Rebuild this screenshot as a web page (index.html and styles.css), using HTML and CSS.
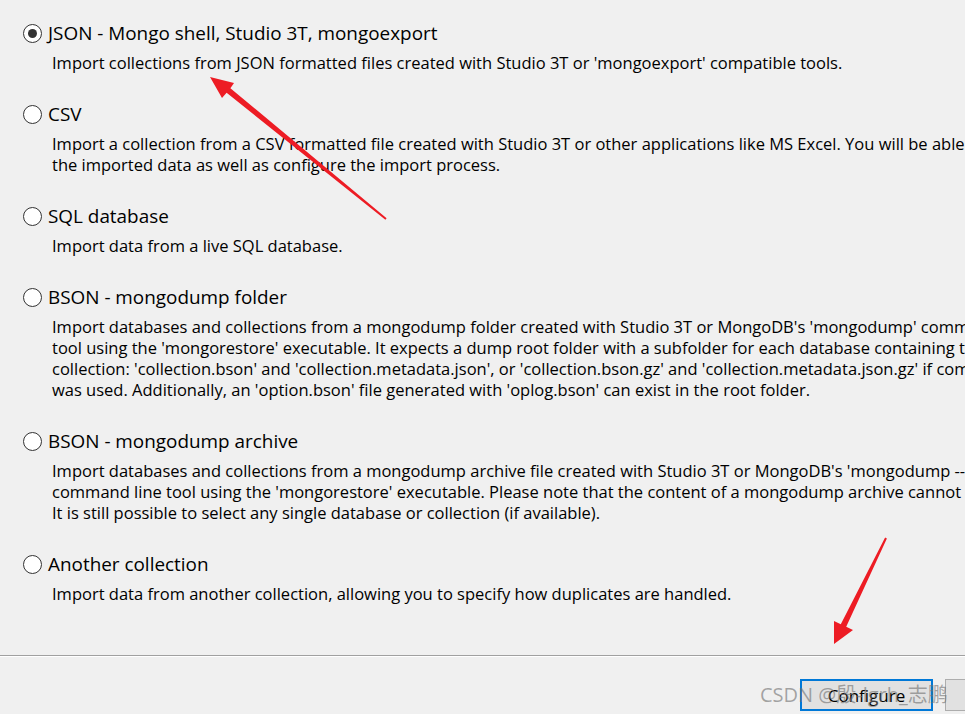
FILE: index.html
```html
<!doctype html>
<html lang="en">
<head>
	<meta charset="UTF-8">
	<meta name="viewport" content="width=device-width">
	<title>Import</title>
<link rel="stylesheet" href="styles.css">
</head>
<body>

<div class="options">
	<div class="option">
		<div class="title"><span class="radio checked"></span>JSON - Mongo shell, Studio 3T, mongoexport</div>
		<p class="desc">Import collections from JSON formatted files created with Studio 3T or 'mongoexport' compatible tools.</p>
	</div>
	<div class="option">
		<div class="title"><span class="radio"></span>CSV</div>
		<p class="desc">Import a collection from a CSV formatted file created with Studio 3T or other applications like MS Excel. You will be able to preview<br>the imported data as well as configure the import process.</p>
	</div>
	<div class="option">
		<div class="title"><span class="radio"></span>SQL database</div>
		<p class="desc">Import data from a live SQL database.</p>
	</div>
	<div class="option">
		<div class="title"><span class="radio"></span>BSON - mongodump folder</div>
		<p class="desc">Import databases and collections from a mongodump folder created with Studio 3T or MongoDB's 'mongodump' command line<br>tool using the 'mongorestore' executable. It expects a dump root folder with a subfolder for each database containing the<br>collection: 'collection.bson' and 'collection.metadata.json', or 'collection.bson.gz' and 'collection.metadata.json.gz' if compression<br>was used. Additionally, an 'option.bson' file generated with 'oplog.bson' can exist in the root folder.</p>
	</div>
	<div class="option">
		<div class="title"><span class="radio"></span>BSON - mongodump archive</div>
		<p class="desc">Import databases and collections from a mongodump archive file created with Studio 3T or MongoDB's 'mongodump --archive'<br>command line tool using the 'mongorestore' executable. Please note that the content of a mongodump archive cannot be<br>It is still possible to select any single database or collection (if available).</p>
	</div>
	<div class="option">
		<div class="title"><span class="radio"></span>Another collection</div>
		<p class="desc">Import data from another collection, allowing you to specify how duplicates are handled.</p>
	</div>
</div>

<div class="footer">
	<button class="btn primary">Configure</button>
	<button class="btn"></button>
	<span class="watermark">CSDN @殷-lgrh_志鹏</span>
</div>

<svg class="arrows" width="965" height="714" viewBox="0 0 965 714">
	<polygon fill="#ed1c24" points="210,77 234,83 230.4,88.2 386.6,218.2 385.4,219.8 226.6,92.8 222,98"/>
	<polygon fill="#ed1c24" points="834,644 834,621 840.8,624.2 885.1,537.6 886.9,538.4 846.2,626.8 853,630"/>
</svg>

</body>
</html>
```

FILE: styles.css
```css
body {
	margin: 0;
	width: 965px;
	height: 714px;
	overflow: hidden;
	position: relative;
	background: #f0f0f0;
	color: #000;
	font-family: "Open Sans", "Noto Sans", "Noto Sans CJK SC", sans-serif;
}
.options {
	padding-top: 20px;
	height: 655px;
	box-sizing: border-box;
	overflow: hidden;
}
.option {
	margin-bottom: 28px;
}
.title {
	display: flex;
	align-items: center;
	gap: 6px;
	padding-left: 23px;
	height: 26px;
	font-size: 18.9px;
	white-space: nowrap;
}
.radio {
	width: 19px;
	height: 19px;
	box-sizing: border-box;
	border: 1px solid #333;
	border-radius: 50%;
	background: #fff;
	display: flex;
	align-items: center;
	justify-content: center;
	flex: none;
}
.radio.checked::after {
	content: "";
	width: 9px;
	height: 9px;
	border-radius: 50%;
	background: #333;
}
.desc {
	margin: 6px 0 0 0;
	padding-left: 52px;
	font-size: 16.5px;
	line-height: 21px;
	white-space: nowrap;
}
.footer {
	border-top: 1px solid #a0a0a0;
	box-shadow: inset 0 1px 0 #fff;
	height: 59px;
	display: flex;
	align-items: flex-start;
	padding: 23px 0 0 800px;
	box-sizing: border-box;
	gap: 12px;
	position: relative;
}
.btn {
	height: 32px;
	width: 133px;
	background: #e1e1e1;
	border: 1px solid #adadad;
	font-family: "Open Sans", "Noto Sans", sans-serif;
	font-size: 17px;
	color: #000;
	padding: 0;
	flex: none;
}
.btn.primary {
	border: 2px solid #0078d7;
}
.watermark {
	position: absolute;
	left: 760px;
	top: 23px;
	font-size: 20px;
	color: rgba(110, 110, 110, 0.6);
	white-space: nowrap;
	font-family: "Open Sans", "Noto Sans CJK SC", sans-serif;
}
.arrows {
	position: absolute;
	left: 0;
	top: 0;
	pointer-events: none;
}
```
